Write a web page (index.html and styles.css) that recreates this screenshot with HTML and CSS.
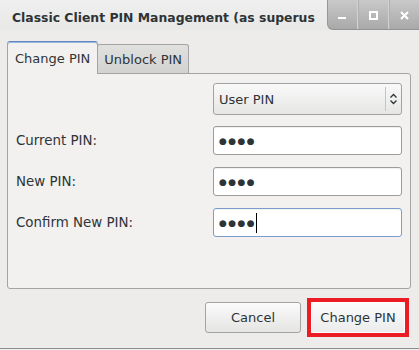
FILE: index.html
```html
<!DOCTYPE html>
<html lang="en">
<head>
    <meta charset="UTF-8">
    <title>Classic Client PIN Management</title>
    <link rel="stylesheet" href="styles.css">
</head>
<body>

    <div class="window">
        <header class="titlebar">
            <span class="title">Classic Client PIN Management (as superus</span>
            <div class="wm-buttons">
                <span class="wm-btn">
                    <svg width="9" height="9" viewBox="0 0 9 9"><rect x="0" y="6" width="8" height="2" fill="#fff"/></svg>
                </span>
                <span class="wm-btn">
                    <svg width="9" height="9" viewBox="0 0 9 9"><rect x="1" y="1" width="7" height="7" fill="none" stroke="#fff" stroke-width="2"/></svg>
                </span>
                <span class="wm-btn">
                    <svg width="9" height="9" viewBox="0 0 9 9"><path d="M1 1 L8 8 M8 1 L1 8" stroke="#fff" stroke-width="2"/></svg>
                </span>
            </div>
        </header>

        <main class="content">
            <div class="notebook">
                <div class="tabs">
                    <div class="tab active">Change PIN</div>
                    <div class="tab">Unblock PIN</div>
                </div>
                <div class="panel">
                    <div class="form-grid">
                        <span></span>
                        <div class="combo">
                            <span class="combo-text">User PIN</span>
                            <span class="combo-arrow">
                                <svg width="9" height="14" viewBox="0 0 9 14">
                                    <path d="M1.5 5.5 L4.5 2.5 L7.5 5.5 M1.5 8.5 L4.5 11.5 L7.5 8.5" fill="none" stroke="#2e3436" stroke-width="1.3"/>
                                </svg>
                            </span>
                        </div>

                        <label class="field-label">Current PIN:</label>
                        <div class="entry"><span class="dots">●●●●</span></div>

                        <label class="field-label">New PIN:</label>
                        <div class="entry"><span class="dots">●●●●</span></div>

                        <label class="field-label">Confirm New PIN:</label>
                        <div class="entry focused"><span class="dots">●●●●</span><span class="caret"></span></div>
                    </div>
                </div>
            </div>

            <div class="actions">
                <button class="btn">Cancel</button>
                <span class="mark"><button class="btn">Change PIN</button></span>
            </div>
        </main>
    </div>

</body>
</html>
```

FILE: styles.css
```css
:root {
    --window-bg: #edeceb;
    --panel-bg: #f2f1f0;
    --border: #a4a4a4;
    --text: #2e3436;
}

* {
    margin: 0;
    padding: 0;
    box-sizing: border-box;
}

body {
    font-family: 'DejaVu Sans', 'Liberation Sans', sans-serif;
    font-size: 13px;
    color: var(--text);
    background-color: #f0f0f0;
    width: 419px;
    height: 350px;
    overflow: hidden;
}

/* --- window --- */
.window {
    height: 349px;
    background-color: var(--window-bg);
    border-bottom: 1px solid #8e8e8e;
    display: flex;
    flex-direction: column;
}

.titlebar {
    height: 30px;
    display: flex;
    align-items: flex-start;
    justify-content: space-between;
    background: linear-gradient(#efefef, #e8e8e7);
}
.title {
    font-weight: 700;
    font-size: 12.4px;
    padding: 10px 0 0 12px;
    white-space: nowrap;
}

.wm-buttons {
    display: flex;
    height: 30px;
    background: linear-gradient(#c9c9c9, #a9a9a9);
    border-left: 1px solid #979797;
    border-bottom: 1px solid #939393;
    border-bottom-left-radius: 6px;
    flex-shrink: 0;
}
.wm-btn {
    width: 31px;
    display: flex;
    align-items: center;
    justify-content: center;
    padding-top: 2px;
    border-left: 1px solid #d2d2d2;
    box-shadow: inset 1px 0 #b0b0b0;
}
.wm-btn:first-child {
    width: 29px;
    border-left: none;
    box-shadow: none;
}

/* --- content --- */
.content {
    flex: 1;
    padding: 11px 8px 0 7px;
}

.tabs {
    display: flex;
    align-items: flex-end;
    height: 32px;
}
.tab {
    height: 29px;
    padding: 0 6px;
    display: flex;
    align-items: center;
    border: 1px solid var(--border);
    border-bottom: none;
    border-radius: 3px 3px 0 0;
    background: linear-gradient(#e0e0df, #d2d2d1);
    margin-left: -1px;
}
.tab.active {
    height: 33px;
    padding: 1px 7px 0;
    margin-left: 0;
    margin-bottom: -1px;
    position: relative;
    z-index: 1;
    background: var(--panel-bg);
    border-top: 1px solid #5f86c0;
    box-shadow: inset 0 1px #9ab7df;
}

.panel {
    height: 216px;
    background-color: var(--panel-bg);
    border: 1px solid var(--border);
    border-radius: 0 3px 3px 3px;
    padding: 9px 8px 0 8px;
}

.form-grid {
    display: grid;
    grid-template-columns: 1fr 189px;
    row-gap: 12px;
    align-items: center;
}
.field-label {
    font-size: 13.4px;
}

.combo {
    height: 32px;
    margin-bottom: -1px;
    display: flex;
    align-items: center;
    border: 1px solid #a3a3a3;
    border-radius: 3px;
    background: linear-gradient(#f9f9f9, #e6e6e5);
}
.combo-text {
    flex: 1;
    padding-left: 5px;
}
.combo-arrow {
    width: 16px;
    height: 24px;
    display: flex;
    align-items: center;
    justify-content: center;
    border-left: 1px solid #c4c4c4;
}

.entry {
    height: 29px;
    display: flex;
    align-items: center;
    padding-left: 5px;
    background-color: #fff;
    border: 1px solid #9c9c9c;
    border-radius: 3px;
    box-shadow: inset 0 1px rgba(0,0,0,0.06);
}
.entry.focused {
    border-color: #7c9dcc;
}
.dots {
    font-size: 9px;
    letter-spacing: 1.4px;
}
.caret {
    width: 1px;
    height: 20px;
    background-color: #000;
}

/* --- buttons --- */
.actions {
    display: flex;
    justify-content: flex-end;
    align-items: center;
    gap: 6px;
    padding: 9px 2px 0 0;
}
.btn {
    font-family: inherit;
    font-size: 13px;
    color: var(--text);
    width: 96px;
    height: 31px;
    border: 1px solid #a3a3a3;
    border-radius: 3px;
    background: linear-gradient(#fbfbfb, #e4e4e3);
}
.mark {
    display: flex;
    border: 4px solid #ec1c24;
}
.mark .btn {
    width: 94px;
    border-color: #fff;
    background: linear-gradient(#fbfbfb, #ececec);
}
```
